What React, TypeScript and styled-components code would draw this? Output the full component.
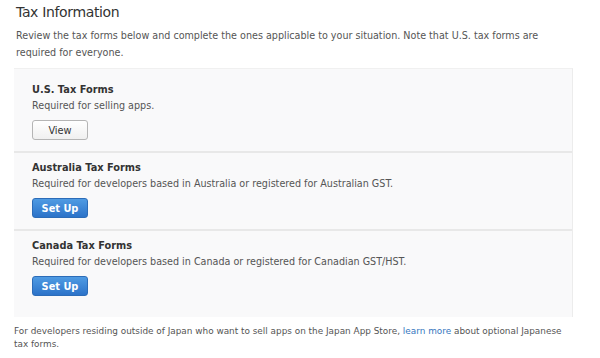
import React from "react";
import styled, { createGlobalStyle } from "styled-components";

const Global = createGlobalStyle`
  html, body { margin: 0; padding: 0; background: #ffffff; }
  body { font-family: "DejaVu Sans", "Liberation Sans", sans-serif; color: #444; }
`;

const Page = styled.div`
  width: 600px;
  height: 358px;
  padding: 2px 27px 0 14px;
  box-sizing: border-box;
  overflow: hidden;
`;

const Title = styled.h1`
  margin: 0 0 0 2px;
  font-size: 14px;
  letter-spacing: -0.35px;
  font-weight: normal;
  color: #333;
  line-height: 20px;
`;

const Intro = styled.p`
  margin: 5px 0 7px 2px;
  font-size: 9.6px;
  line-height: 17px;
  color: #555;
`;

const Panel = styled.div`
  background: #f9f9fa;
  border-top: 1px solid #f0f0f0;
  border-right: 1px solid #ececec;
  padding: 6px 0 10px;
`;

const Section = styled.div<{ $last?: boolean }>`
  padding: 7px 18px 11px;
  border-bottom: ${(p) => (p.$last ? "none" : "2px solid #e8e8e8")};
`;

const Heading = styled.h2`
  margin: 0;
  font-size: 9.8px;
  font-weight: bold;
  color: #333;
  line-height: 16px;
`;

const Desc = styled.p`
  margin: 0 0 6px;
  font-size: 9.6px;
  line-height: 16px;
  color: #555;
`;

const Button = styled.button<{ $primary?: boolean }>`
  display: block;
  width: 56px;
  height: 20px;
  padding: 0;
  border-radius: 3px;
  font-family: inherit;
  font-size: 9.8px;
  cursor: pointer;
  ${(p) =>
    p.$primary
      ? `
    color: #fff;
    font-weight: bold;
    border: 1px solid #2c6cb8;
    background: linear-gradient(#4f9be3, #2c73c9);
  `
      : `
    color: #333;
    border: 1px solid #b5b5b5;
    background: linear-gradient(#ffffff, #f0f0f0);
  `}
`;

const Footer = styled.p`
  margin: 8px 0 0;
  font-size: 8.9px;
  line-height: 13px;
  color: #555;
`;

const Link = styled.a`
  color: #3677c0;
  text-decoration: none;
`;

const sections = [
  { title: "U.S. Tax Forms", desc: "Required for selling apps.", action: "View", primary: false },
  {
    title: "Australia Tax Forms",
    desc: "Required for developers based in Australia or registered for Australian GST.",
    action: "Set Up",
    primary: true,
  },
  {
    title: "Canada Tax Forms",
    desc: "Required for developers based in Canada or registered for Canadian GST/HST.",
    action: "Set Up",
    primary: true,
  },
];

export default function App() {
  return (
    <>
      <Global />
      <Page>
        <Title>Tax Information</Title>
        <Intro>
          Review the tax forms below and complete the ones applicable to your situation. Note that U.S. tax forms are
          required for everyone.
        </Intro>
        <Panel>
          {sections.map((s, i) => (
            <Section key={s.title} $last={i === sections.length - 1}>
              <Heading>{s.title}</Heading>
              <Desc>{s.desc}</Desc>
              <Button $primary={s.primary}>{s.action}</Button>
            </Section>
          ))}
        </Panel>
        <Footer>
          For developers residing outside of Japan who want to sell apps on the Japan App Store,{" "}
          <Link href="#">learn more</Link> about optional Japanese tax forms.
        </Footer>
      </Page>
    </>
  );
}
